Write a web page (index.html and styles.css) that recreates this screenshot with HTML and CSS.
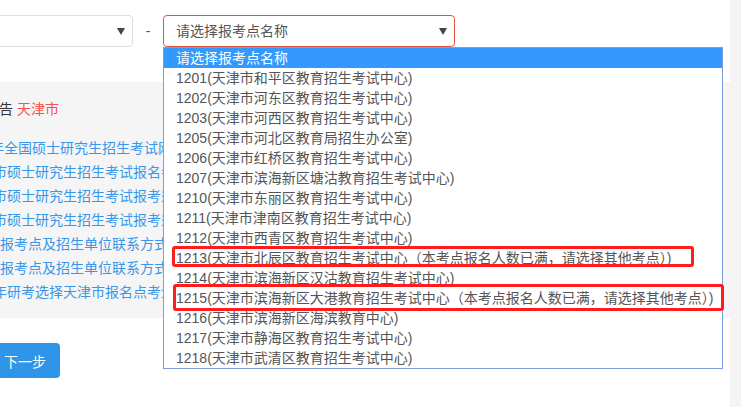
FILE: index.html
```html
<!DOCTYPE html>
<html lang="zh-CN">
  <head>
    <meta charset="UTF-8" />
    <meta name="viewport" content="width=device-width, initial-scale=1.0" />
    <link rel="stylesheet" href="styles.css">
  </head>
  <body>
    <div class="page">
      <div class="content">
        <div class="filter-row">
          <div class="select select-province">
            <span class="select-text"></span>
            <span class="select-arrow"></span>
          </div>
          <span class="dash">-</span>
          <div class="select-wrap">
            <div class="select select-site">
              <span class="select-text">请选择报考点名称</span>
              <span class="select-arrow"></span>
            </div>
            <div class="dropdown">
              <div class="option selected">请选择报考点名称</div>
              <div class="option">1201(天津市和平区教育招生考试中心)</div>
              <div class="option">1202(天津市河东区教育招生考试中心)</div>
              <div class="option">1203(天津市河西区教育招生考试中心)</div>
              <div class="option">1205(天津市河北区教育局招生办公室)</div>
              <div class="option">1206(天津市红桥区教育招生考试中心)</div>
              <div class="option">1207(天津市滨海新区塘沽教育招生考试中心)</div>
              <div class="option">1210(天津市东丽区教育招生考试中心)</div>
              <div class="option">1211(天津市津南区教育招生考试中心)</div>
              <div class="option">1212(天津市西青区教育招生考试中心)</div>
              <div class="option">1213(天津市北辰区教育招生考试中心（本考点报名人数已满，请选择其他考点）)</div>
              <div class="option">1214(天津市滨海新区汉沽教育招生考试中心)</div>
              <div class="option">1215(天津市滨海新区大港教育招生考试中心（本考点报名人数已满，请选择其他考点）)</div>
              <div class="option">1216(天津市滨海新区海滨教育中心)</div>
              <div class="option">1217(天津市静海区教育招生考试中心)</div>
              <div class="option">1218(天津市武清区教育招生考试中心)</div>

              <div class="mark mark-1213"></div>
              <div class="mark mark-1215"></div>
            </div>
          </div>
        </div>

        <div class="notice-panel">
          <div class="notice-title">告 <span class="city">天津市</span></div>
          <ul class="notice-list">
            <li class="cut-wide"><a href="#">年全国硕士研究生招生考试网上报名公告</a></li>
            <li class="cut"><a href="#">市硕士研究生招生考试报名考生须知</a></li>
            <li class="cut"><a href="#">市硕士研究生招生考试报考须知</a></li>
            <li class="cut"><a href="#">市硕士研究生招生考试报考须知</a></li>
            <li><a href="#">报考点及招生单位联系方式</a></li>
            <li><a href="#">报考点及招生单位联系方式</a></li>
            <li class="cut"><a href="#">年研考选择天津市报名点考生须知</a></li>
          </ul>
        </div>

        <button class="next-button">下一步</button>
      </div>
      <div class="scroll-track"></div>
    </div>
  </body>
</html>
```

FILE: styles.css
```css
html,
body {
  margin: 0;
  padding: 0;
  width: 741px;
  height: 407px;
  overflow: hidden;
  background: #fff;
}

body {
  font-family: "Liberation Sans", "Noto Sans CJK SC", sans-serif;
  font-size: 14px;
  color: #555;
}

.page {
  display: flex;
  height: 407px;
}

.content {
  width: 730px;
  display: flex;
  flex-direction: column;
  overflow: hidden;
}

.scroll-track {
  width: 11px;
  background: #f4f4f4;
}

.filter-row {
  display: flex;
  align-items: center;
  margin-top: 15px;
  position: relative;
  z-index: 2;
}

.select {
  box-sizing: border-box;
  height: 32px;
  border: 1px solid #ddd;
  border-radius: 4px;
  display: flex;
  align-items: center;
  justify-content: space-between;
  padding: 0 7px 0 12px;
  background: #fff;
}

.select-province {
  width: 200px;
  margin-left: -67px;
}

.select-site {
  width: 292px;
  border-color: #e5533a;
}

.select-text {
  line-height: 20px;
  color: #555;
  white-space: nowrap;
}

.select-arrow {
  width: 0;
  height: 0;
  border-left: 4px solid transparent;
  border-right: 4px solid transparent;
  border-top: 7px solid #444;
  margin-top: 1px;
}

.dash {
  width: 30px;
  text-align: center;
  color: #555;
}

.select-wrap {
  position: relative;
}

.dropdown {
  position: absolute;
  top: 32px;
  left: 0;
  width: 560px;
  box-sizing: border-box;
  border: 1px solid #7c9fdb;
  background: #fff;
}

.option {
  height: 20px;
  line-height: 20px;
  padding-left: 12px;
  white-space: nowrap;
  color: #555;
}

.option.selected {
  background: #3399ff;
  color: #fff;
}

.mark {
  position: absolute;
  box-sizing: border-box;
  border: 3px solid #ff1c1c;
  border-radius: 3px;
}

.mark-1213 {
  left: 8px;
  top: 198px;
  width: 522px;
  height: 21px;
}

.mark-1215 {
  left: 9px;
  top: 236px;
  width: 551px;
  height: 27px;
}

.notice-panel {
  margin-top: 35px;
  height: 236px;
  box-sizing: border-box;
  background: #f5f5f5;
  padding-top: 17px;
  z-index: 1;
}

.notice-title {
  line-height: 20px;
  color: #333;
  margin-left: -1px;
}

.city {
  color: #f4524d;
}

.notice-list {
  list-style: none;
  margin: 17px 0 0;
  padding: 0;
  width: 163px;
  overflow: hidden;
}

.notice-list li {
  line-height: 24px;
  white-space: nowrap;
}

.notice-list li.cut {
  margin-left: -7px;
}

.notice-list li.cut-wide {
  margin-left: -10px;
}

.notice-list a {
  color: #3797ea;
  text-decoration: none;
}

.next-button {
  align-self: flex-start;
  margin-top: 25px;
  margin-left: -10px;
  height: 35px;
  padding: 0 14px;
  border: none;
  border-radius: 4px;
  background: #2e95e8;
  color: #fff;
  font-family: inherit;
  font-size: 14px;
}
```
